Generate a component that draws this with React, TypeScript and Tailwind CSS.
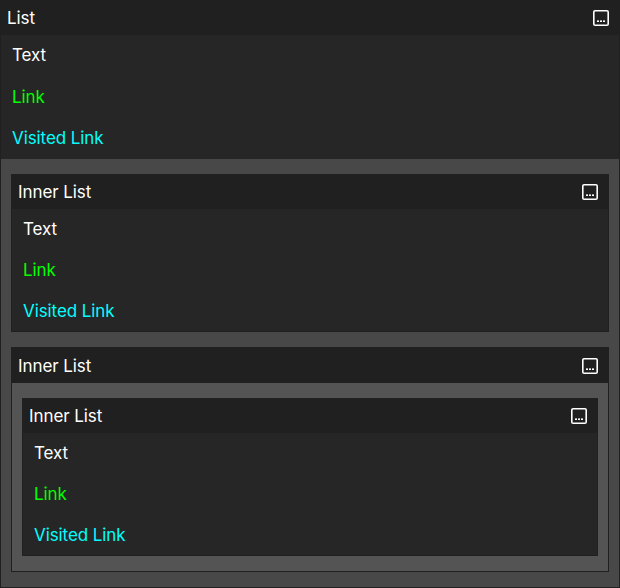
import type { ReactNode } from "react";

function MenuIcon() {
  return (
    <svg width="16" height="16" viewBox="0 0 16 16" className="block">
      <rect x="0.8" y="0.8" width="14.4" height="14.4" rx="1.3" fill="none" stroke="#ffffff" strokeWidth="1.6" />
      <rect x="4" y="10.4" width="2" height="1.6" fill="#ffffff" />
      <rect x="7" y="10.4" width="2" height="1.6" fill="#ffffff" />
      <rect x="10" y="10.4" width="2" height="1.6" fill="#ffffff" />
    </svg>
  );
}

function Header({ title, tall = false }: { title: string; tall?: boolean }) {
  return (
    <div className={`flex items-start justify-between bg-[#202020] pr-2.5 pl-1.5 ${tall ? "h-[35px] pt-px" : "h-[34px]"}`}>
      <span className="leading-[34px]">{title}</span>
      <button type="button" aria-label="Options" className="mt-[9px]">
        <MenuIcon />
      </button>
    </div>
  );
}

function Items({ loose = false }: { loose?: boolean }) {
  return (
    <ul className={`bg-[#262626] pl-[11px] leading-[41px] ${loose ? "h-[124px]" : "h-[122px]"}`}>
      <li>Text</li>
      <li className={`text-[#00ff00] ${loose ? "pt-px" : ""}`}>Link</li>
      <li className="text-[#00ffff]">Visited Link</li>
    </ul>
  );
}

function List({ children }: { children: ReactNode }) {
  return <section className="border border-[#202020]">{children}</section>;
}

export default function App() {
  return (
    <main className="h-[588px] w-[620px] bg-[#484848] font-['Inter',sans-serif] text-[17px] tracking-[-0.08px] text-white">
      <List>
        <Header title="List" />
        <Items loose />
        <div className="flex flex-col gap-[15px] bg-[#484848] px-2.5 py-[15px]">
          <List>
            <Header title="Inner List" />
            <Items />
          </List>
          <List>
            <Header title="Inner List" tall />
            <div className="bg-[#545454] px-2.5 py-[15px]">
              <List>
                <Header title="Inner List" />
                <Items />
              </List>
            </div>
          </List>
        </div>
      </List>
    </main>
  );
}
